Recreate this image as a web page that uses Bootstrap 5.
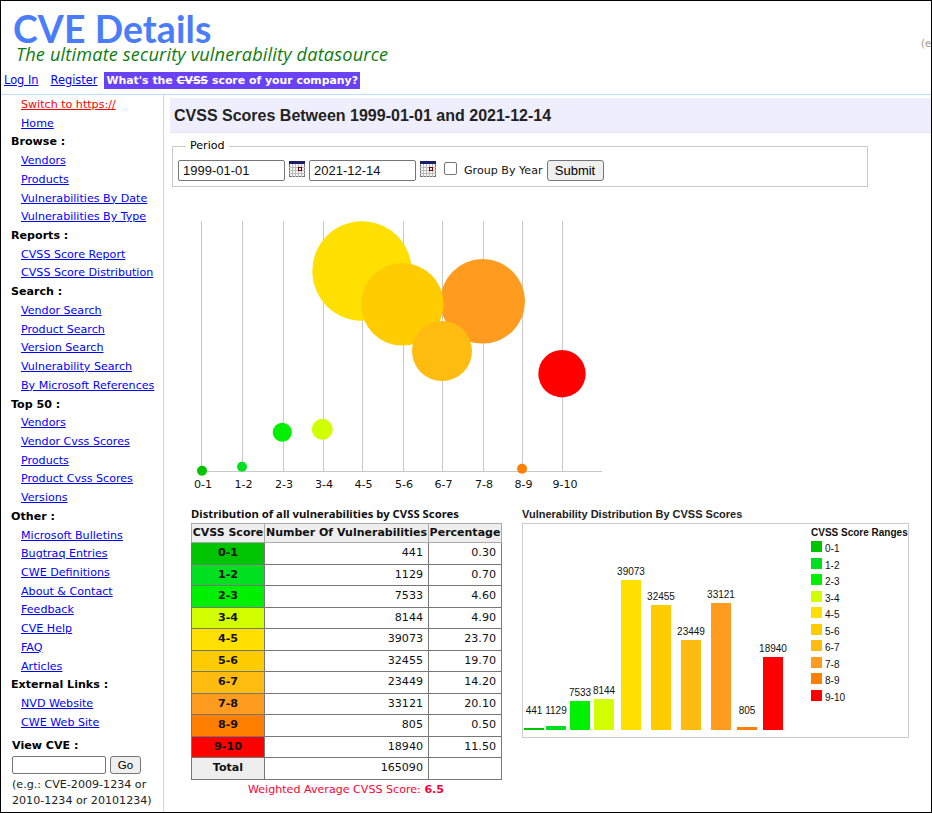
<!DOCTYPE html>
<html lang="en">
<head>
<meta charset="utf-8">
<title>CVE Details</title>
<link href="https://cdn.jsdelivr.net/npm/bootstrap@5.3.0/dist/css/bootstrap.min.css" rel="stylesheet">
<style>
html,body{height:100%;margin:0;overflow:hidden;background:#fff}
body{font-family:"DejaVu Sans",Verdana,sans-serif;font-size:11.1px;color:#000}
a{color:#0000ff}
.frame{width:932px;height:813px;border:1px solid #000;overflow:hidden;background:#fff}
.site-head{height:94px;border-bottom:1px solid #bfdbff;position:relative}
.brand-name{font-family:Lato,"Noto Sans",sans-serif;font-weight:700;font-size:37.4px;line-height:34px;color:#4a7dfb;padding:11px 0 0 12px;letter-spacing:.1px;box-sizing:content-box}
.brand-tag{font-family:"Open Sans",sans-serif;font-style:italic;font-size:18.2px;line-height:16px;color:#107c10;padding:0 0 0 15px;letter-spacing:.15px}
.ad-clip{position:absolute;right:0;top:35px;color:#a98;font-size:10px;width:10px;overflow:hidden;white-space:nowrap}
.head-links{padding:10px 0 0 3px;gap:12px;font-size:11.4px;line-height:17px}
.promo{background:#6a42f5;color:#fff;font-weight:700;padding:0 2px;text-decoration:none;margin-left:-5px;font-size:10.9px}
.promo s{text-decoration:line-through}
.side{width:163px;border-right:1px solid #bfdbff;flex:none;padding-top:1px;height:718px}
.side-item{display:block;height:18.72px;line-height:18.72px;padding-left:20px;white-space:nowrap}
.side-head{display:block;height:18.72px;line-height:18.72px;padding-left:10px;font-weight:700}
.side-red{color:#ff0000}
.view-title{font-weight:700;padding:6px 0 0 11px;line-height:16px}
.view-form{padding:2px 0 0 11px;gap:4px}
.view-input{width:94px;height:18px;border:1px solid #767676;border-radius:2px;padding:0}
.plain-btn{background:#efefef;border:1px solid #767676;border-radius:3px;color:#000;font-family:"Liberation Sans",sans-serif;padding:0}
.go-btn{width:31px;height:18px;font-size:11.5px;line-height:15px}
.view-help{padding:3px 0 0 11px;line-height:16px;white-space:nowrap;color:#222}
.main-col{flex:1;min-width:0;padding:3px 0 0 6px}
.title-band{background:#eeeefc;border-bottom:1px solid #e4e4f5;height:35px;padding-left:4px;font-family:"Liberation Sans",sans-serif;font-weight:700;font-size:16px;line-height:36px;color:#222}
.period{margin:6px 0 0 2px;width:696px;height:48px;border:1px solid #c8c8c8;padding:7px 6px 0 5px;position:relative}
.period legend{float:none;width:auto;font-size:11.1px;line-height:14px;margin:-8px 0 0 8px;padding:0 4px;background:#fff;display:table}
.date-input{width:107px;height:21px;border:1px solid #767676;border-radius:2px;padding:0 4px;font-family:"Liberation Sans",sans-serif;font-size:13px;color:#111}
.cal-icon{margin:-4px 4px 0 4px;flex:none}
.group-check{width:13px;height:13px;margin:0 7px 0 4px;border:1px solid #767676;border-radius:2px;appearance:none;background:#fff;flex:none;position:relative;top:-2px}
.group-label{font-size:11.1px;margin:2px 4px 0 0;color:#111;white-space:nowrap}
.submit-btn{width:57px;height:21px;font-size:13px;line-height:17px}
.bubble-svg{display:block;margin-top:34px}
.bubble-svg text{font-family:"DejaVu Sans",sans-serif;font-size:11.1px;fill:#111}
.lower{padding-left:21px;margin-top:15px;gap:20px}
.lower-title{font-family:"Noto Sans",sans-serif;font-weight:700;font-size:11.3px;line-height:12px;height:15px;color:#111;white-space:nowrap}
.score-tbl{border-collapse:collapse;width:310px;margin:0;table-layout:fixed;font-size:11.1px;color:#111}
.score-tbl td,.score-tbl th{border:1px solid #777;padding:0 5px;height:21.5px;line-height:16px;text-align:right;font-weight:400;white-space:nowrap}
.score-tbl thead th{background:#eee;font-weight:700;font-size:11px;text-align:center;height:19px;border-color:#aaa;padding:0}
.score-tbl .sc{text-align:center;font-weight:700;color:#111;padding:0}
.weighted{color:#ff0033;text-align:center;width:310px;line-height:16px;margin-top:2px}
.chart-title{font-family:"Liberation Sans",sans-serif;font-weight:700;font-size:11px;line-height:12px;height:15px;color:#222;white-space:nowrap}
.bar-box{display:block;border:1px solid #ccc;background:#fff}
.bar-box text{font-family:"Liberation Sans",sans-serif;font-size:10px;fill:#111}
.bar-box .leg-h{font-weight:700;font-size:10px}
</style>
</head>
<body>
<div class="frame">
  <header class="site-head">
    <div class="brand-name">CVE Details</div>
    <div class="brand-tag">The ultimate security vulnerability datasource</div>
    <div class="ad-clip">(e.g.</div>
    <div class="head-links d-flex align-items-center">
      <a href="#">Log In</a><a href="#">Register</a>
      <a class="promo" href="#">What's the <s>CVSS</s> score of your company?</a>
    </div>
  </header>
  <div class="d-flex">
    <nav class="side">
      <a class="side-item side-red" href="#">Switch to https://</a>
      <a class="side-item" href="#">Home</a>
      <span class="side-head">Browse :</span>
      <a class="side-item" href="#">Vendors</a>
      <a class="side-item" href="#">Products</a>
      <a class="side-item" href="#">Vulnerabilities By Date</a>
      <a class="side-item" href="#">Vulnerabilities By Type</a>
      <span class="side-head">Reports :</span>
      <a class="side-item" href="#">CVSS Score Report</a>
      <a class="side-item" href="#">CVSS Score Distribution</a>
      <span class="side-head">Search :</span>
      <a class="side-item" href="#">Vendor Search</a>
      <a class="side-item" href="#">Product Search</a>
      <a class="side-item" href="#">Version Search</a>
      <a class="side-item" href="#">Vulnerability Search</a>
      <a class="side-item" href="#">By Microsoft References</a>
      <span class="side-head">Top 50 :</span>
      <a class="side-item" href="#">Vendors</a>
      <a class="side-item" href="#">Vendor Cvss Scores</a>
      <a class="side-item" href="#">Products</a>
      <a class="side-item" href="#">Product Cvss Scores</a>
      <a class="side-item" href="#">Versions</a>
      <span class="side-head">Other :</span>
      <a class="side-item" href="#">Microsoft Bulletins</a>
      <a class="side-item" href="#">Bugtraq Entries</a>
      <a class="side-item" href="#">CWE Definitions</a>
      <a class="side-item" href="#">About &amp; Contact</a>
      <a class="side-item" href="#">Feedback</a>
      <a class="side-item" href="#">CVE Help</a>
      <a class="side-item" href="#">FAQ</a>
      <a class="side-item" href="#">Articles</a>
      <span class="side-head">External Links :</span>
      <a class="side-item" href="#">NVD Website</a>
      <a class="side-item" href="#">CWE Web Site</a>
      <div class="view-title">View CVE :</div>
      <div class="view-form d-flex">
        <input class="view-input" type="text" aria-label="CVE id">
        <button class="plain-btn go-btn" type="button">Go</button>
      </div>
      <div class="view-help">(e.g.: CVE-2009-1234 or<br>2010-1234 or 20101234)</div>
    </nav>
    <main class="main-col">
      <div class="title-band">CVSS Scores Between 1999-01-01 and 2021-12-14</div>
      <fieldset class="period">
        <legend>Period</legend>
        <div class="d-flex align-items-center">
          <input class="date-input" type="text" value="1999-01-01" aria-label="From">
          <svg class="cal-icon" width="16" height="16" viewBox="0 0 16 16"><rect x=".5" y=".5" width="15" height="15" fill="#f4f4f4" stroke="#777"/><rect width="16" height="3" fill="#1c1c6c"/><path d="M0 6.5H16M0 9.5H16M0 12.5H16M3.5 3V16M6.5 3V16M9.5 3V16M12.5 3V16" stroke="#bbb" fill="none"/><rect x="9.5" y="6.5" width="3" height="3" fill="#eee" stroke="#700"/></svg>
          <input class="date-input" type="text" value="2021-12-14" aria-label="To">
          <svg class="cal-icon" width="16" height="16" viewBox="0 0 16 16"><rect x=".5" y=".5" width="15" height="15" fill="#f4f4f4" stroke="#777"/><rect width="16" height="3" fill="#1c1c6c"/><path d="M0 6.5H16M0 9.5H16M0 12.5H16M3.5 3V16M6.5 3V16M9.5 3V16M12.5 3V16" stroke="#bbb" fill="none"/><rect x="9.5" y="6.5" width="3" height="3" fill="#eee" stroke="#700"/></svg>
          <input class="group-check" type="checkbox" aria-label="Group By Year">
          <span class="group-label">Group By Year</span>
          <button class="plain-btn submit-btn" type="button">Submit</button>
        </div>
      </fieldset>
      <svg class="bubble-svg" width="440" height="272" viewBox="170 221 440 272" role="img" aria-label="Bubble chart of CVSS scores">
        <g stroke="#c8c8c8" stroke-width="1">
          <path d="M201.5 221V471M242.5 221V471M283.5 221V471M323.5 221V471M362.5 221V471M403.5 221V471M442.5 221V471M483.5 221V471M522.5 221V471M562.5 221V471M201 471.5H602" fill="none"/>
        </g>
        <circle cx="362" cy="271" r="49.7" fill="#ffe000"/>
        <circle cx="482.7" cy="301.3" r="42.3" fill="#ff9c20"/>
        <circle cx="402.3" cy="304.3" r="41.3" fill="#ffcc00"/>
        <circle cx="442" cy="351" r="30" fill="#ffbc10"/>
        <circle cx="562" cy="373.7" r="23.7" fill="#ff0000"/>
        <circle cx="322.3" cy="429.3" r="10.5" fill="#d1ff00"/>
        <circle cx="282.3" cy="432.3" r="9.5" fill="#00f000"/>
        <circle cx="242" cy="466.7" r="5" fill="#00e020"/>
        <circle cx="202" cy="470.7" r="5" fill="#00c400"/>
        <circle cx="522" cy="468.7" r="5" fill="#ff8000"/>
        <g text-anchor="middle">
          <text x="203" y="488">0-1</text><text x="243.5" y="488">1-2</text><text x="284" y="488">2-3</text><text x="324" y="488">3-4</text><text x="363.5" y="488">4-5</text><text x="404" y="488">5-6</text><text x="443.5" y="488">6-7</text><text x="484" y="488">7-8</text><text x="523.5" y="488">8-9</text><text x="565" y="488">9-10</text>
        </g>
      </svg>
      <div class="lower d-flex">
        <div>
          <div class="lower-title">Distribution of all vulnerabilities by CVSS Scores</div>
          <table class="score-tbl">
            <colgroup><col style="width:73px"><col style="width:164px"><col style="width:73px"></colgroup>
            <thead><tr><th>CVSS Score</th><th>Number Of Vulnerabilities</th><th>Percentage</th></tr></thead>
            <tbody>
              <tr><td class="sc" style="background:#00c400">0-1</td><td>441</td><td>0.30</td></tr>
              <tr><td class="sc" style="background:#00e020">1-2</td><td>1129</td><td>0.70</td></tr>
              <tr><td class="sc" style="background:#00f000">2-3</td><td>7533</td><td>4.60</td></tr>
              <tr><td class="sc" style="background:#d1ff00">3-4</td><td>8144</td><td>4.90</td></tr>
              <tr><td class="sc" style="background:#ffe000">4-5</td><td>39073</td><td>23.70</td></tr>
              <tr><td class="sc" style="background:#ffcc00">5-6</td><td>32455</td><td>19.70</td></tr>
              <tr><td class="sc" style="background:#ffbc10">6-7</td><td>23449</td><td>14.20</td></tr>
              <tr><td class="sc" style="background:#ff9c20">7-8</td><td>33121</td><td>20.10</td></tr>
              <tr><td class="sc" style="background:#ff8000">8-9</td><td>805</td><td>0.50</td></tr>
              <tr><td class="sc" style="background:#ff0000">9-10</td><td>18940</td><td>11.50</td></tr>
              <tr><td class="sc" style="background:#eee">Total</td><td>165090</td><td></td></tr>
            </tbody>
          </table>
          <div class="weighted">Weighted Average CVSS Score: <b>6.5</b></div>
        </div>
        <div>
          <div class="chart-title">Vulnerability Distribution By CVSS Scores</div>
          <svg class="bar-box" width="387" height="215" viewBox="523 524 385 213" role="img" aria-label="Bar chart of vulnerability distribution">
            <g>
              <rect x="524" y="728" width="20" height="2" fill="#00c400"/><rect x="546" y="726" width="20" height="4" fill="#00e020"/><rect x="570" y="701" width="20" height="29" fill="#00f000"/><rect x="594" y="699" width="20" height="31" fill="#d1ff00"/><rect x="621" y="580" width="20" height="150" fill="#ffe000"/><rect x="651" y="605" width="20" height="125" fill="#ffcc00"/><rect x="681" y="640" width="20" height="90" fill="#ffbc10"/><rect x="711" y="603" width="20" height="127" fill="#ff9c20"/><rect x="737" y="727" width="20" height="3" fill="#ff8000"/><rect x="763" y="657" width="20" height="73" fill="#ff0000"/>
            </g>
            <g text-anchor="middle">
              <text x="534" y="714">441</text><text x="556" y="714">1129</text><text x="580" y="696">7533</text><text x="604" y="694">8144</text><text x="631" y="575">39073</text><text x="661" y="600">32455</text><text x="691" y="635">23449</text><text x="721" y="598">33121</text><text x="747" y="714">805</text><text x="773" y="652">18940</text>
            </g>
            <text class="leg-h" x="811" y="536">CVSS Score Ranges</text>
            <g>
              <rect x="811" y="541" width="11" height="11" fill="#00c400"/><text x="825" y="552">0-1</text>
              <rect x="811" y="558" width="11" height="11" fill="#00e020"/><text x="825" y="569">1-2</text>
              <rect x="811" y="574" width="11" height="11" fill="#00f000"/><text x="825" y="585">2-3</text>
              <rect x="811" y="591" width="11" height="11" fill="#d1ff00"/><text x="825" y="602">3-4</text>
              <rect x="811" y="607" width="11" height="11" fill="#ffe000"/><text x="825" y="618">4-5</text>
              <rect x="811" y="624" width="11" height="11" fill="#ffcc00"/><text x="825" y="635">5-6</text>
              <rect x="811" y="640" width="11" height="11" fill="#ffbc10"/><text x="825" y="651">6-7</text>
              <rect x="811" y="657" width="11" height="11" fill="#ff9c20"/><text x="825" y="668">7-8</text>
              <rect x="811" y="673" width="11" height="11" fill="#ff8000"/><text x="825" y="684">8-9</text>
              <rect x="811" y="690" width="11" height="11" fill="#ff0000"/><text x="825" y="701">9-10</text>
            </g>
          </svg>
        </div>
      </div>
    </main>
  </div>
</div>
<script src="https://cdn.jsdelivr.net/npm/bootstrap@5.3.0/dist/js/bootstrap.bundle.min.js"></script>
</body>
</html>
